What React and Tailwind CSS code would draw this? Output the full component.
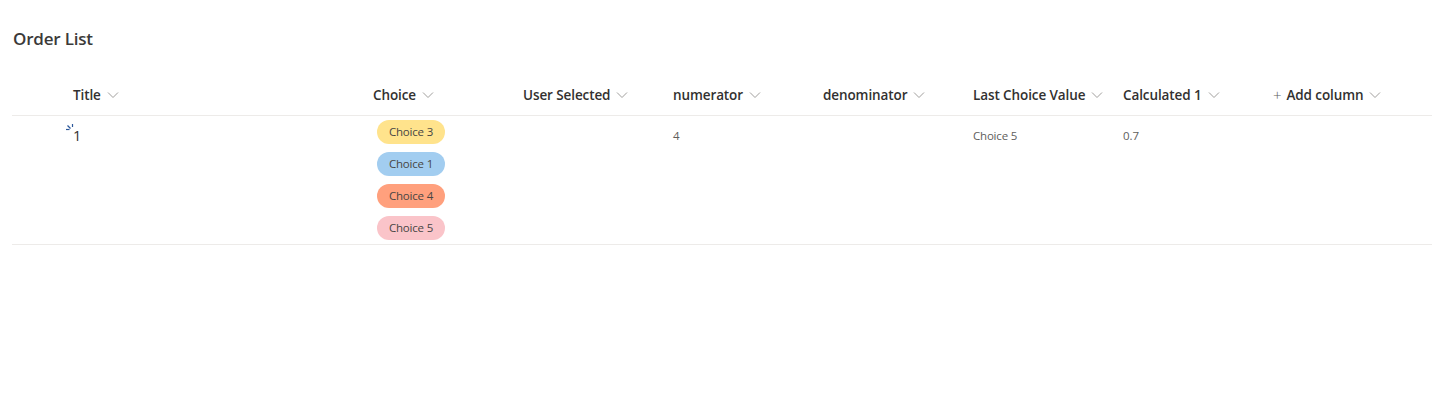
import React from "react";

const Chevron = () => (
  <svg width="12" height="12" viewBox="0 0 12 12" className="ml-[6px] shrink-0" fill="none">
    <path d="M1 3.5 L6 8.5 L11 3.5" stroke="#a19f9d" strokeWidth="1" />
  </svg>
);

const cols = [
  { label: "Title", w: "w-[300px]" },
  { label: "Choice", w: "w-[150px]" },
  { label: "User Selected", w: "w-[150px]" },
  { label: "numerator", w: "w-[150px]" },
  { label: "denominator", w: "w-[150px]" },
  { label: "Last Choice Value", w: "w-[150px]" },
  { label: "Calculated 1", w: "w-[150px]" },
];

const pills = [
  { t: "Choice 3", c: "bg-[#ffe38c]" },
  { t: "Choice 1", c: "bg-[#a2cdf0]" },
  { t: "Choice 4", c: "bg-[#ffa07d]" },
  { t: "Choice 5", c: "bg-[#fac4c9]" },
];

export default function App() {
  return (
    <div className="w-[1433px] h-[395px] bg-white pl-[12px] pr-[1px] text-[#323130]" style={{ fontFamily: '"Open Sans", "Noto Sans", sans-serif' }}>
      <div className="h-[73px] pt-[27px]">
        <h1 className="text-[17px] leading-[24px] font-semibold pl-[1px] tracking-[-0.2px] text-[#3b3a39]">Order List</h1>
      </div>
      <div className="flex h-[43px] border-b border-[#edebe9] items-center pt-[2px]">
        <div className="w-[48px] shrink-0" />
        {cols.map((c) => (
          <div key={c.label} className={`${c.w} shrink-0 flex items-center pl-[13px] text-[13.5px] font-semibold tracking-[-0.1px]`}>
            {c.label}
            <Chevron />
          </div>
        ))}
        <div className="w-[150px] shrink-0 flex items-center pl-[13px] text-[13.5px] font-semibold tracking-[-0.1px]">
          <span className="text-[#605e5c] mr-[5px] text-[15px] font-light leading-none">+</span>
          Add column
          <Chevron />
        </div>
      </div>
      <div className="flex h-[129px] border-b border-[#edebe9]">
        <div className="w-[48px] shrink-0" />
        <div className="w-[300px] shrink-0 pl-[6px] pt-[8px] flex">
          <svg width="9" height="9" viewBox="0 0 9 9" className="shrink-0 -mr-[2px]" fill="none">
            <path d="M0 5.5 L3.5 5.5" stroke="#2b579a" strokeWidth="1.2" />
            <path d="M1.5 1.5 L4.5 4.5" stroke="#2b579a" strokeWidth="1.2" />
            <path d="M6.5 0 L6.5 3" stroke="#2b579a" strokeWidth="1.2" />
          </svg>
          <span className="text-[14.5px] leading-[20px] mt-[2px] text-[#323130]">1</span>
        </div>
        <div className="w-[150px] shrink-0 pl-[17px] pt-[4px] flex flex-col gap-[8px] items-start">
          {pills.map((p) => (
            <span key={p.t} className={`${p.c} h-[24px] w-[68px] rounded-full flex items-center justify-center text-[11.5px] text-[#484644] tracking-[-0.2px]`}>
              {p.t}
            </span>
          ))}
        </div>
        <div className="w-[150px] shrink-0" />
        <div className="w-[150px] shrink-0 pl-[13px] pt-[12px] text-[11.5px] leading-[16px] text-[#605e5c]">4</div>
        <div className="w-[150px] shrink-0" />
        <div className="w-[150px] shrink-0 pl-[13px] pt-[12px] text-[11.5px] leading-[16px] text-[#605e5c] tracking-[-0.2px]">Choice 5</div>
        <div className="w-[150px] shrink-0 pl-[13px] pt-[12px] text-[11.5px] leading-[16px] text-[#605e5c]">0.7</div>
      </div>
    </div>
  );
}
